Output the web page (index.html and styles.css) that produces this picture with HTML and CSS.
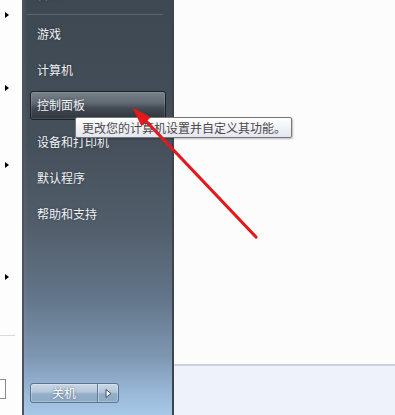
FILE: index.html
```html
<!DOCTYPE html>
<html lang="zh-CN">
<head>
<meta charset="utf-8">
<title>开始菜单</title>
<link rel="stylesheet" href="styles.css">
</head>
<body>
<div class="screen">
  <div class="left">
    <span class="tri tri-a"></span>
    <span class="tri tri-b"></span>
    <span class="tri tri-c"></span>
    <span class="tri tri-d"></span>
    <span class="left-rule"></span>
    <span class="search-box"></span>
  </div>
  <div class="panel">
    <div class="item item-first">音乐</div>
    <div class="sep"></div>
    <div class="item">游戏</div>
    <div class="item">计算机</div>
    <div class="item active">控制面板</div>
    <div class="item">设备和打印机</div>
    <div class="item">默认程序</div>
    <div class="item">帮助和支持</div>
    <div class="power">
      <div class="power-main">关机</div>
      <div class="power-arrow">
        <svg width="7" height="9" viewBox="0 0 7 9"><path d="M1 0.5 L6 4.5 L1 8.5 Z" fill="#ffffff" stroke="#3b4d60" stroke-width="1" stroke-linejoin="round"/></svg>
      </div>
    </div>
  </div>
  <div class="right">
    <div class="right-top"></div>
    <div class="right-bottom"></div>
  </div>
  <div class="tooltip">更改您的计算机设置并自定义其功能。</div>
  <svg class="arrow" width="395" height="415" viewBox="0 0 395 415">
    <line x1="144" y1="119" x2="256" y2="237" stroke="#e3191b" stroke-width="3.2" stroke-linecap="round"/>
    <polygon points="132.5,107.5 141.4,126.3 150.8,117.3" fill="#e3191b"/>
  </svg>
</div>
</body>
</html>
```

FILE: styles.css
```css
* { box-sizing: border-box; }
html, body { margin: 0; padding: 0; }
body {
  width: 395px;
  height: 415px;
  overflow: hidden;
  font-family: "Noto Sans CJK SC", "Microsoft YaHei", sans-serif;
  font-size: 12px;
  background: #fcfcfc;
}
.screen {
  position: relative;
  width: 395px;
  height: 415px;
  display: flex;
}

/* left partial pane */
.left {
  width: 22px;
  height: 415px;
  background: #fdfdfd;
  display: flex;
  flex-direction: column;
}
.tri {
  display: block;
  width: 0;
  height: 0;
  margin-left: 5px;
  border-left: 4px solid #000;
  border-top: 3.5px solid transparent;
  border-bottom: 3.5px solid transparent;
}
.tri-a { margin-top: 11.5px; }
.tri-b { margin-top: 67px; }
.tri-c { margin-top: 71px; }
.tri-d { margin-top: 106px; }
.left-rule {
  display: block;
  width: 15px;
  height: 1px;
  background: #d9d9d9;
  margin-top: 55.5px;
}
.search-box {
  display: block;
  width: 6px;
  height: 20px;
  margin-top: 43px;
  background: #fff;
  border: 1px solid #8a8a8a;
  border-left: none;
}

/* start menu column */
.panel {
  width: 152px;
  height: 415px;
  border-left: 2px solid #4b535c;
  border-right: 2px solid #3d444c;
  padding: 0 6px;
  display: flex;
  flex-direction: column;
  background: linear-gradient(to bottom,
    #3e4852 0%,
    #45505b 35%,
    #525e6b 55%,
    #63758a 72%,
    #7e97b1 86%,
    #9ab9d9 95%,
    #a8c8e8 100%);
  box-shadow: inset 4px 0 3px -2px rgba(255,255,255,0.06);
}
.item {
  height: 29px;
  line-height: 27px;
  padding-left: 6px;
  border: 1px solid transparent;
  border-radius: 3px;
  color: #eef2f6;
  text-shadow: 0 0 3px rgba(0,0,0,0.35);
  white-space: nowrap;
}
.item + .item { margin-top: 7px; }
.item-first { margin-top: -21px; }
.sep {
  height: 1px;
  margin: 6px 3px 3.5px -3px;
  background: #5c6671;
}
.active {
  border-color: #1b2128;
  background: linear-gradient(to bottom, #78808a 0%, #626a74 40%, #434a53 60%, #2f363e 100%);
  box-shadow: inset 0 0 0 1px rgba(255,255,255,0.12);
  line-height: 25px;
}

.power {
  margin-top: auto;
  margin-bottom: 12px;
  width: 89px;
  height: 20px;
  display: flex;
  border: 1px solid #5a7391;
  border-radius: 3px;
  background: linear-gradient(to bottom, #cad8e6 0%, #b2c6da 45%, #95aec8 55%, #8eaac6 100%);
  box-shadow: inset 0 0 0 1px rgba(255,255,255,0.25);
}
.power-main {
  width: 67px;
  text-align: center;
  line-height: 18px;
  color: #ffffff;
  text-shadow: 0 0 2px rgba(30,50,80,0.7);
  border-right: 1px solid #607b99;
}
.power-arrow {
  flex: 1;
  display: flex;
  align-items: center;
  justify-content: center;
  box-shadow: inset 1px 0 0 rgba(255,255,255,0.35);
}
.power-arrow svg { display: block; }

/* right pane */
.right {
  flex: 1;
  display: flex;
  flex-direction: column;
}
.right-top {
  height: 366px;
  background: #fcfcfc;
  border-bottom: 2px solid #cbd3de;
}
.right-bottom {
  flex: 1;
  background: #eef3fb;
}

/* overlays */
.tooltip {
  position: absolute;
  left: 75px;
  top: 117px;
  width: 217px;
  height: 21px;
  padding-left: 6px;
  border: 1px solid #767676;
  border-radius: 2px;
  background: linear-gradient(to bottom, #ffffff 0%, #e4e5f0 100%);
  color: #4a4a4a;
  line-height: 19px;
  white-space: nowrap;
  box-shadow: 1px 1px 2px rgba(0,0,0,0.25);
}
.arrow {
  position: absolute;
  left: 0;
  top: 0;
  pointer-events: none;
}
```
